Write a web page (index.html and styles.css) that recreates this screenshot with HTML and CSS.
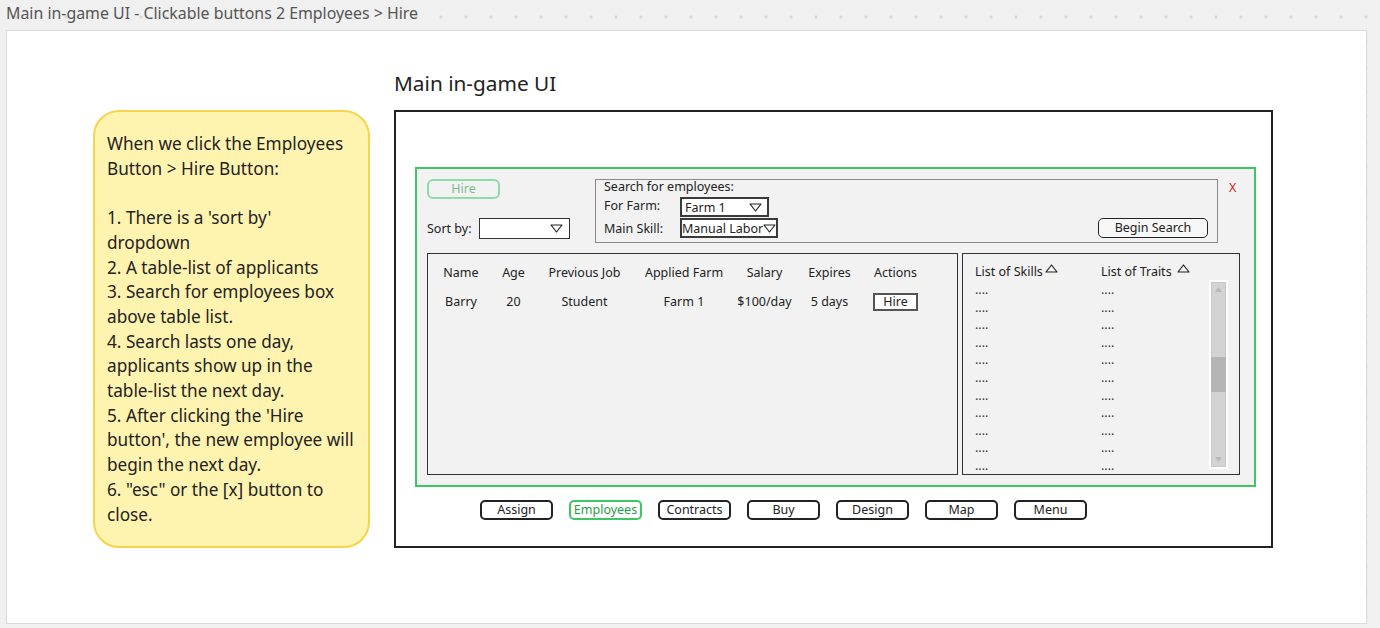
FILE: index.html
```html
<!DOCTYPE html>
<html>
<head>
<meta charset="utf-8">
<title>Main in-game UI - Clickable buttons 2 Employees &gt; Hire</title>
<link rel="stylesheet" href="styles.css">
</head>
<body>
<div class="page-title">Main in-game UI - Clickable buttons 2 Employees &gt; Hire</div>
<div class="canvas">
  <div class="note">When we click the Employees<br>Button &gt; Hire Button:<br><br>1. There is a 'sort by'<br>dropdown<br>2. A table-list of applicants<br>3. Search for employees box<br>above table list.<br>4. Search lasts one day,<br>applicants show up in the<br>table-list the next day.<br>5. After clicking the 'Hire<br>button', the new employee will<br>begin the next day.<br>6. "esc" or the [x] button to<br>close.</div>
  <div class="mock">
    <div class="mock-title">Main in-game UI</div>
    <div class="frame">
      <div class="panel">
        <div class="panel-top">
          <div class="left-col">
            <div class="tab-btn">Hire</div>
            <div class="sort-row">
              <span class="sort-label">Sort by:</span>
              <div class="dd sort-dd"><span></span><svg class="tri" width="13" height="9" viewBox="0 0 13 9"><path d="M1 1 H12 L6.5 8 Z" fill="none" stroke="#222" stroke-width="1.2" stroke-linejoin="round"/></svg></div>
            </div>
          </div>
          <div class="search-box">
            <div class="search-title">Search for employees:</div>
            <div class="search-row first">
              <span class="field-label">For Farm:</span>
              <div class="dd field-dd farm-dd"><span>Farm 1</span><svg class="tri" width="13" height="9" viewBox="0 0 13 9"><path d="M1 1 H12 L6.5 8 Z" fill="none" stroke="#222" stroke-width="1.2" stroke-linejoin="round"/></svg></div>
            </div>
            <div class="search-row">
              <span class="field-label">Main Skill:</span>
              <div class="dd field-dd skill-dd"><span>Manual Labor</span><svg class="tri" width="13" height="9" viewBox="0 0 13 9"><path d="M1 1 H12 L6.5 8 Z" fill="none" stroke="#222" stroke-width="1.2" stroke-linejoin="round"/></svg></div>
              <div class="begin-btn">Begin Search</div>
            </div>
          </div>
          <div class="close">X</div>
        </div>
        <div class="panel-body">
          <div class="table">
            <div class="trow">
              <div>Name</div><div>Age</div><div>Previous Job</div><div>Applied Farm</div><div>Salary</div><div>Expires</div><div>Actions</div>
            </div>
            <div class="trow">
              <div>Barry</div><div>20</div><div>Student</div><div>Farm 1</div><div>$100/day</div><div>5 days</div><div class="row-btn">Hire</div>
            </div>
          </div>
          <div class="details">
            <div class="list skills">
              <div class="list-head">List of Skills<svg class="up" width="13" height="9" viewBox="0 0 13 9"><path d="M1 8 H12 L6.5 1 Z" fill="none" stroke="#222" stroke-width="1.2" stroke-linejoin="round"/></svg></div>
              <div class="list-item">....</div><div class="list-item">....</div><div class="list-item">....</div><div class="list-item">....</div><div class="list-item">....</div><div class="list-item">....</div><div class="list-item">....</div><div class="list-item">....</div><div class="list-item">....</div><div class="list-item">....</div><div class="list-item">....</div>
            </div>
            <div class="list traits">
              <div class="list-head">List of Traits <svg class="up" width="13" height="9" viewBox="0 0 13 9"><path d="M1 8 H12 L6.5 1 Z" fill="none" stroke="#222" stroke-width="1.2" stroke-linejoin="round"/></svg></div>
              <div class="list-item">....</div><div class="list-item">....</div><div class="list-item">....</div><div class="list-item">....</div><div class="list-item">....</div><div class="list-item">....</div><div class="list-item">....</div><div class="list-item">....</div><div class="list-item">....</div><div class="list-item">....</div><div class="list-item">....</div>
            </div>
            <div class="scroll">
              <svg class="sb-arrow" width="7" height="5" viewBox="0 0 7 5"><path d="M0 5 L3.5 0 L7 5 Z" fill="#b9b9b9"/></svg>
              <div class="sb-thumb"></div>
              <svg class="sb-arrow down" width="7" height="5" viewBox="0 0 7 5"><path d="M0 0 L7 0 L3.5 5 Z" fill="#b9b9b9"/></svg>
            </div>
          </div>
        </div>
      </div>
      <div class="nav">
        <div class="nav-btn">Assign</div>
        <div class="nav-btn active">Employees</div>
        <div class="nav-btn">Contracts</div>
        <div class="nav-btn">Buy</div>
        <div class="nav-btn">Design</div>
        <div class="nav-btn">Map</div>
        <div class="nav-btn">Menu</div>
      </div>
    </div>
  </div>
</div>
</body>
</html>
```

FILE: styles.css
```css
* { box-sizing: border-box; }
html, body { margin: 0; }
body {
  width: 1380px;
  height: 628px;
  overflow: hidden;
  background-color: #f0f0f0;
  background-image: radial-gradient(circle at center, #d2d2d2 0, #d2d2d2 1px, transparent 1.6px);
  background-size: 25px 25px;
  background-position: 3.5px 4.5px;
  font-family: "Noto Sans", "Open Sans", sans-serif;
  color: #222;
}
.page-title {
  height: 30px;
  padding: 3px 0 0 6px;
  font-size: 15.9px;
  line-height: 20px;
  color: #555;
}
.canvas {
  margin-left: 6px;
  width: 1361px;
  height: 594px;
  background: #fff;
  border: 1px solid #dadada;
  display: flex;
  align-items: flex-start;
  padding: 40px 0 0 86px;
}
.note {
  margin-top: 39px;
  width: 277px;
  height: 438px;
  flex: none;
  background: #fff3b0;
  border: 2px solid #f6d44c;
  border-radius: 26px;
  padding: 20px 0 0 12px;
  font-size: 17.2px;
  line-height: 24.7px;
  white-space: nowrap;
  color: #222;
}
.mock { margin-left: 24px; }
.mock-title {
  font-size: 20.8px;
  line-height: 24px;
  margin-bottom: 15px;
  color: #222;
}
.frame {
  width: 879px;
  height: 438px;
  border: 2px solid #222;
  background: #fff;
  padding: 55px 0 0 19px;
  display: flex;
  flex-direction: column;
  align-items: flex-start;
}
.panel {
  width: 841px;
  height: 320px;
  border: 2px solid #3dc763;
  background: #f2f2f2;
  padding: 10px 0 0 10px;
  display: flex;
  flex-direction: column;
  gap: 10px;
  font-size: 12.5px;
}
.panel-top {
  display: flex;
  align-items: flex-start;
  height: 64px;
}
.left-col {
  width: 168px;
  flex: none;
  display: flex;
  flex-direction: column;
}
.tab-btn {
  width: 73px;
  height: 20px;
  border: 2px solid #8edba6;
  border-radius: 6px;
  color: #79bf92;
  line-height: 16px;
  text-align: center;
}
.sort-row {
  margin-top: 19px;
  display: flex;
  align-items: center;
}
.sort-label { width: 52px; flex: none; }
.dd {
  display: flex;
  align-items: center;
  justify-content: space-between;
  background: #fff;
  white-space: nowrap;
  flex: none;
}
.tri { display: block; flex: none; }
.sort-dd {
  width: 91px;
  height: 21px;
  border: 1px solid #333;
  padding-right: 6px;
}
.search-box {
  width: 623px;
  height: 64px;
  flex: none;
  border: 1px solid #8a8a8a;
  padding: 0 9px 4px 8px;
  display: flex;
  flex-direction: column;
}
.search-title { line-height: 14px; }
.search-row {
  display: flex;
  align-items: center;
  height: 20px;
  margin-top: 1px;
}
.search-row.first { margin-top: 3px; }
.search-row.first .field-label { margin-top: -3px; }
.field-label { width: 76px; flex: none; }
.field-dd {
  height: 20px;
  border: 2px solid #3a3a3a;
}
.farm-dd { width: 89px; padding: 0 5px 0 3px; }
.skill-dd { width: 98px; padding: 0; }
.begin-btn {
  margin-left: auto;
  width: 110px;
  height: 20px;
  border: 1px solid #222;
  border-radius: 5px;
  text-align: center;
  line-height: 18px;
  background: #f7f7f7;
}
.close {
  margin: 1px 0 0 11px;
  color: #d42020;
  line-height: 16px;
}
.panel-body {
  display: flex;
  gap: 4px;
  height: 222px;
}
.table {
  width: 531px;
  height: 222px;
  border: 1px solid #333;
  padding: 10px 0 0 2px;
}
.trow {
  display: grid;
  grid-template-columns: 62px 43px 99px 100px 61px 69px 63px;
  line-height: 18px;
  text-align: center;
  white-space: nowrap;
}
.trow + .trow { margin-top: 10.5px; }
.row-btn {
  justify-self: center;
  width: 45px;
  height: 18px;
  border: 2px solid #555;
  background: #fff;
  line-height: 14px;
}
.details {
  width: 278px;
  height: 222px;
  border: 1px solid #333;
  padding: 9px 0 0 12px;
  display: flex;
  align-items: flex-start;
  overflow: hidden;
}
.list { width: 126px; flex: none; }
.list.traits { width: 108px; }
.list-head {
  line-height: 18px;
  white-space: nowrap;
}
.up { margin-left: 2px; vertical-align: 3px; }
.list-item {
  line-height: 17.6px;
  color: #333;
}
.scroll {
  margin-top: 17px;
  width: 19px;
  height: 189px;
  flex: none;
  border: 2px solid #fff;
  background: #d3d3d3;
  box-shadow: inset 0 0 0 1px #c9c9c9;
  display: flex;
  flex-direction: column;
  align-items: center;
  padding: 5px 0;
}
.sb-arrow { display: block; flex: none; }
.sb-arrow.down { margin-top: auto; }
.sb-thumb {
  width: 15px;
  height: 35px;
  background: #b4b4b4;
  margin-top: 65px;
  flex: none;
}
.nav {
  margin: 13px 0 0 65px;
  display: flex;
  gap: 16px;
}
.nav-btn {
  width: 73px;
  height: 20px;
  border: 2px solid #222;
  border-radius: 5px;
  font-size: 12.5px;
  line-height: 16px;
  text-align: center;
  background: #fff;
}
.nav-btn.active {
  border-color: #3dc763;
  color: #1f9e45;
}
```
